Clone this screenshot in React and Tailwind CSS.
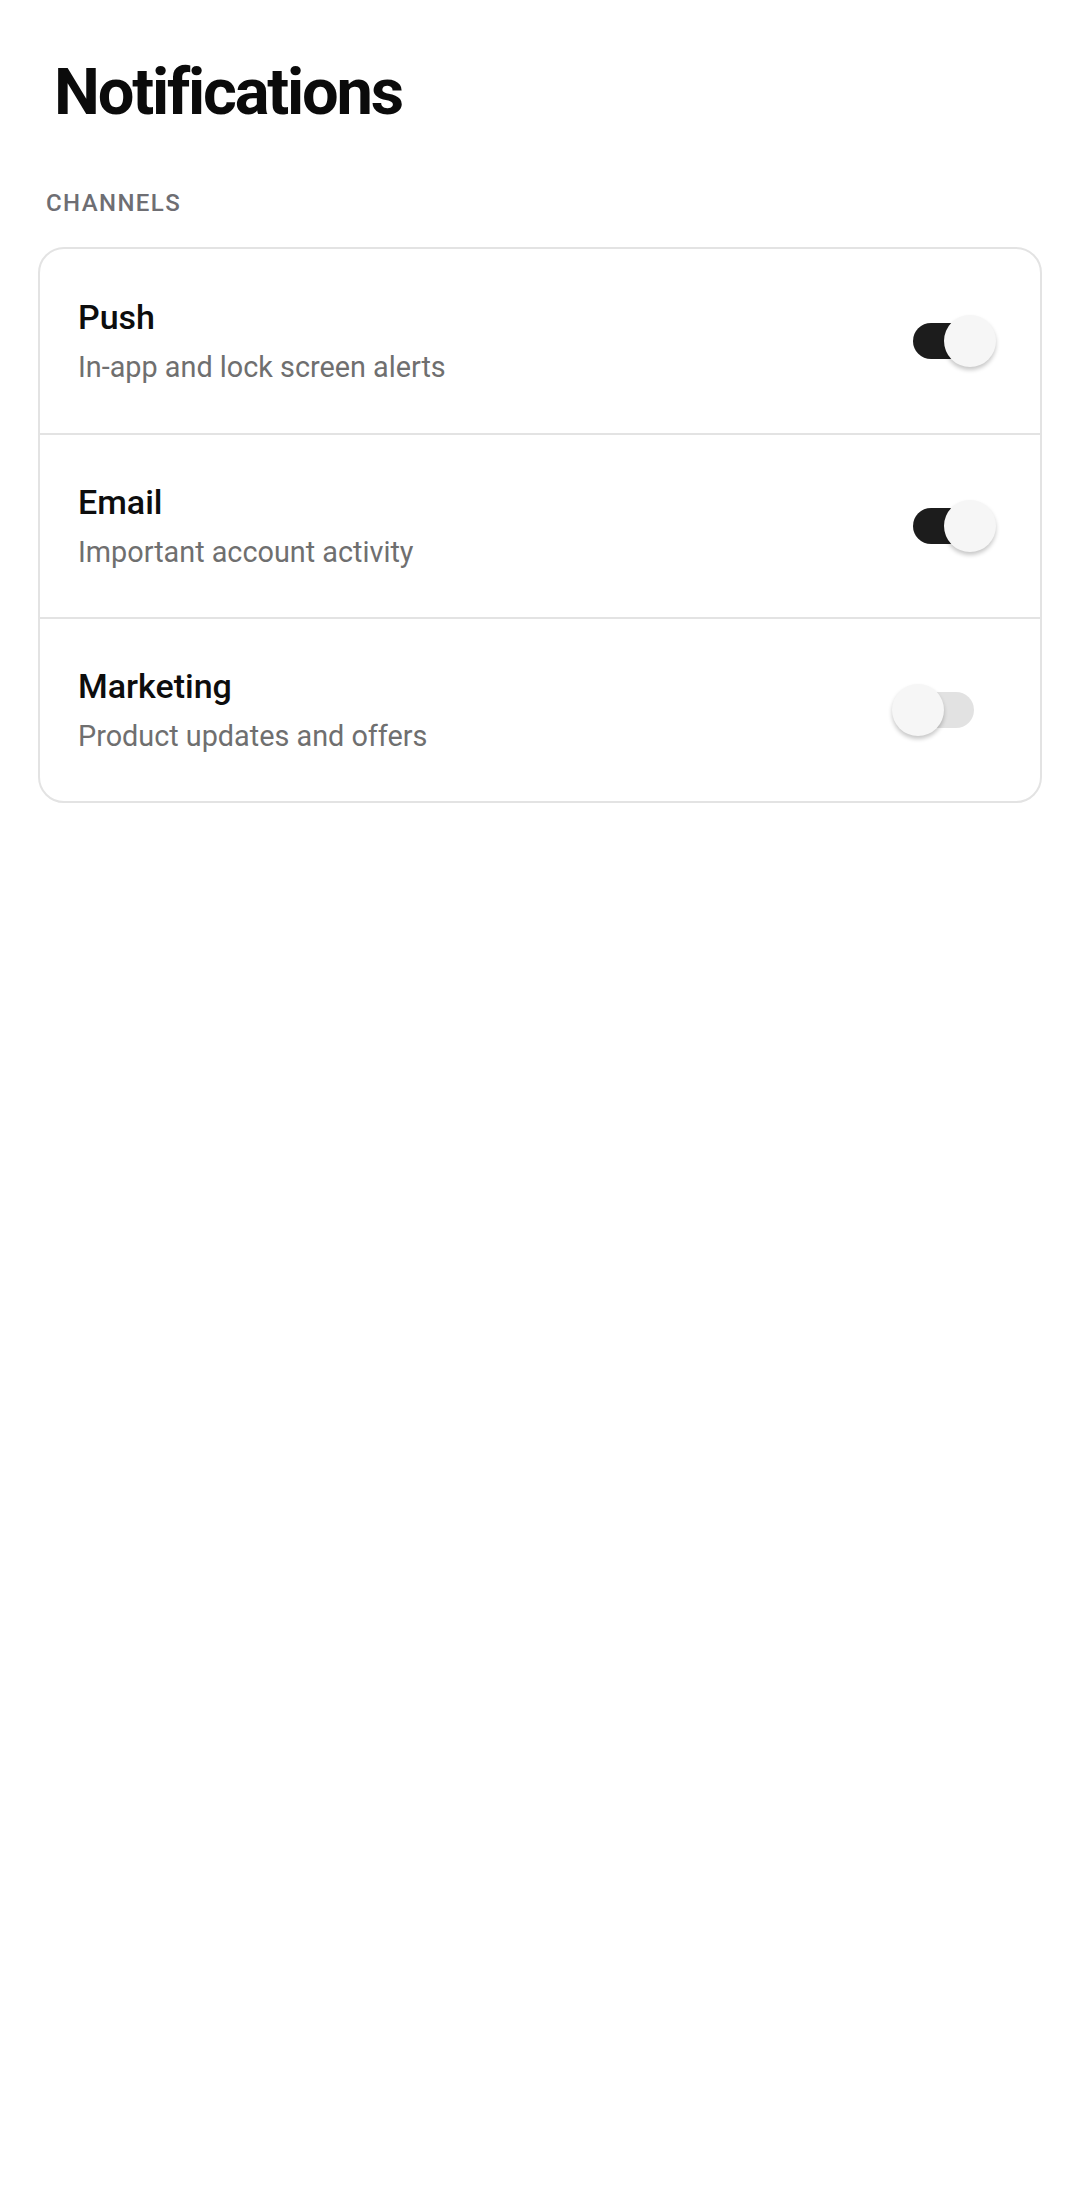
import React from 'react';

const channels = [
  { title: 'Push', desc: 'In-app and lock screen alerts', on: true },
  { title: 'Email', desc: 'Important account activity', on: true },
  { title: 'Marketing', desc: 'Product updates and offers', on: false },
];

function Toggle({ on }) {
  return (
    <div className="relative h-[52px] w-[104px] shrink-0">
      {on ? (
        <>
          <div className="absolute left-[21px] top-[8px] h-[36px] w-[75px] rounded-full bg-[#1c1c1c]" />
          <div className="absolute left-[52px] top-0 h-[52px] w-[52px] rounded-full bg-[#f6f6f6] shadow-[0_3px_4px_rgba(0,0,0,0.22)]" />
        </>
      ) : (
        <>
          <div className="absolute left-[8px] top-[8px] h-[36px] w-[74px] rounded-full bg-[#e2e2e2]" />
          <div className="absolute left-0 top-0 h-[52px] w-[52px] rounded-full bg-[#f6f6f6] shadow-[0_3px_4px_rgba(0,0,0,0.22)]" />
        </>
      )}
    </div>
  );
}

export default function App() {
  return (
    <div className="min-h-[2204px] bg-white font-['Roboto',sans-serif]">
      <h1 className="pl-[54px] pt-[60px] text-[65px] font-bold leading-none tracking-[-2.2px] text-[#0b0b0b]">
        Notifications
      </h1>
      <div className="pl-[46px] pt-[66px] text-[24px] font-medium leading-none tracking-[1.4px] text-[#6e6e73]">
        CHANNELS
      </div>
      <div className="mx-[38px] mt-[32px] overflow-hidden rounded-[26px] border-2 border-[#e3e3e3] bg-white">
        {channels.map((c, i) => (
          <div
            key={c.title}
            className={`flex h-[184px] items-center justify-between pl-[38px] pr-[44px] ${
              i > 0 ? 'border-t-2 border-[#e3e3e3]' : ''
            }`}
          >
            <div className="flex flex-col gap-[19px]">
              <div className="text-[34px] font-medium leading-none text-[#0d0d0d]">{c.title}</div>
              <div className="text-[28.8px] leading-none text-[#6f6f6f]">{c.desc}</div>
            </div>
            <Toggle on={c.on} />
          </div>
        ))}
      </div>
    </div>
  );
}
